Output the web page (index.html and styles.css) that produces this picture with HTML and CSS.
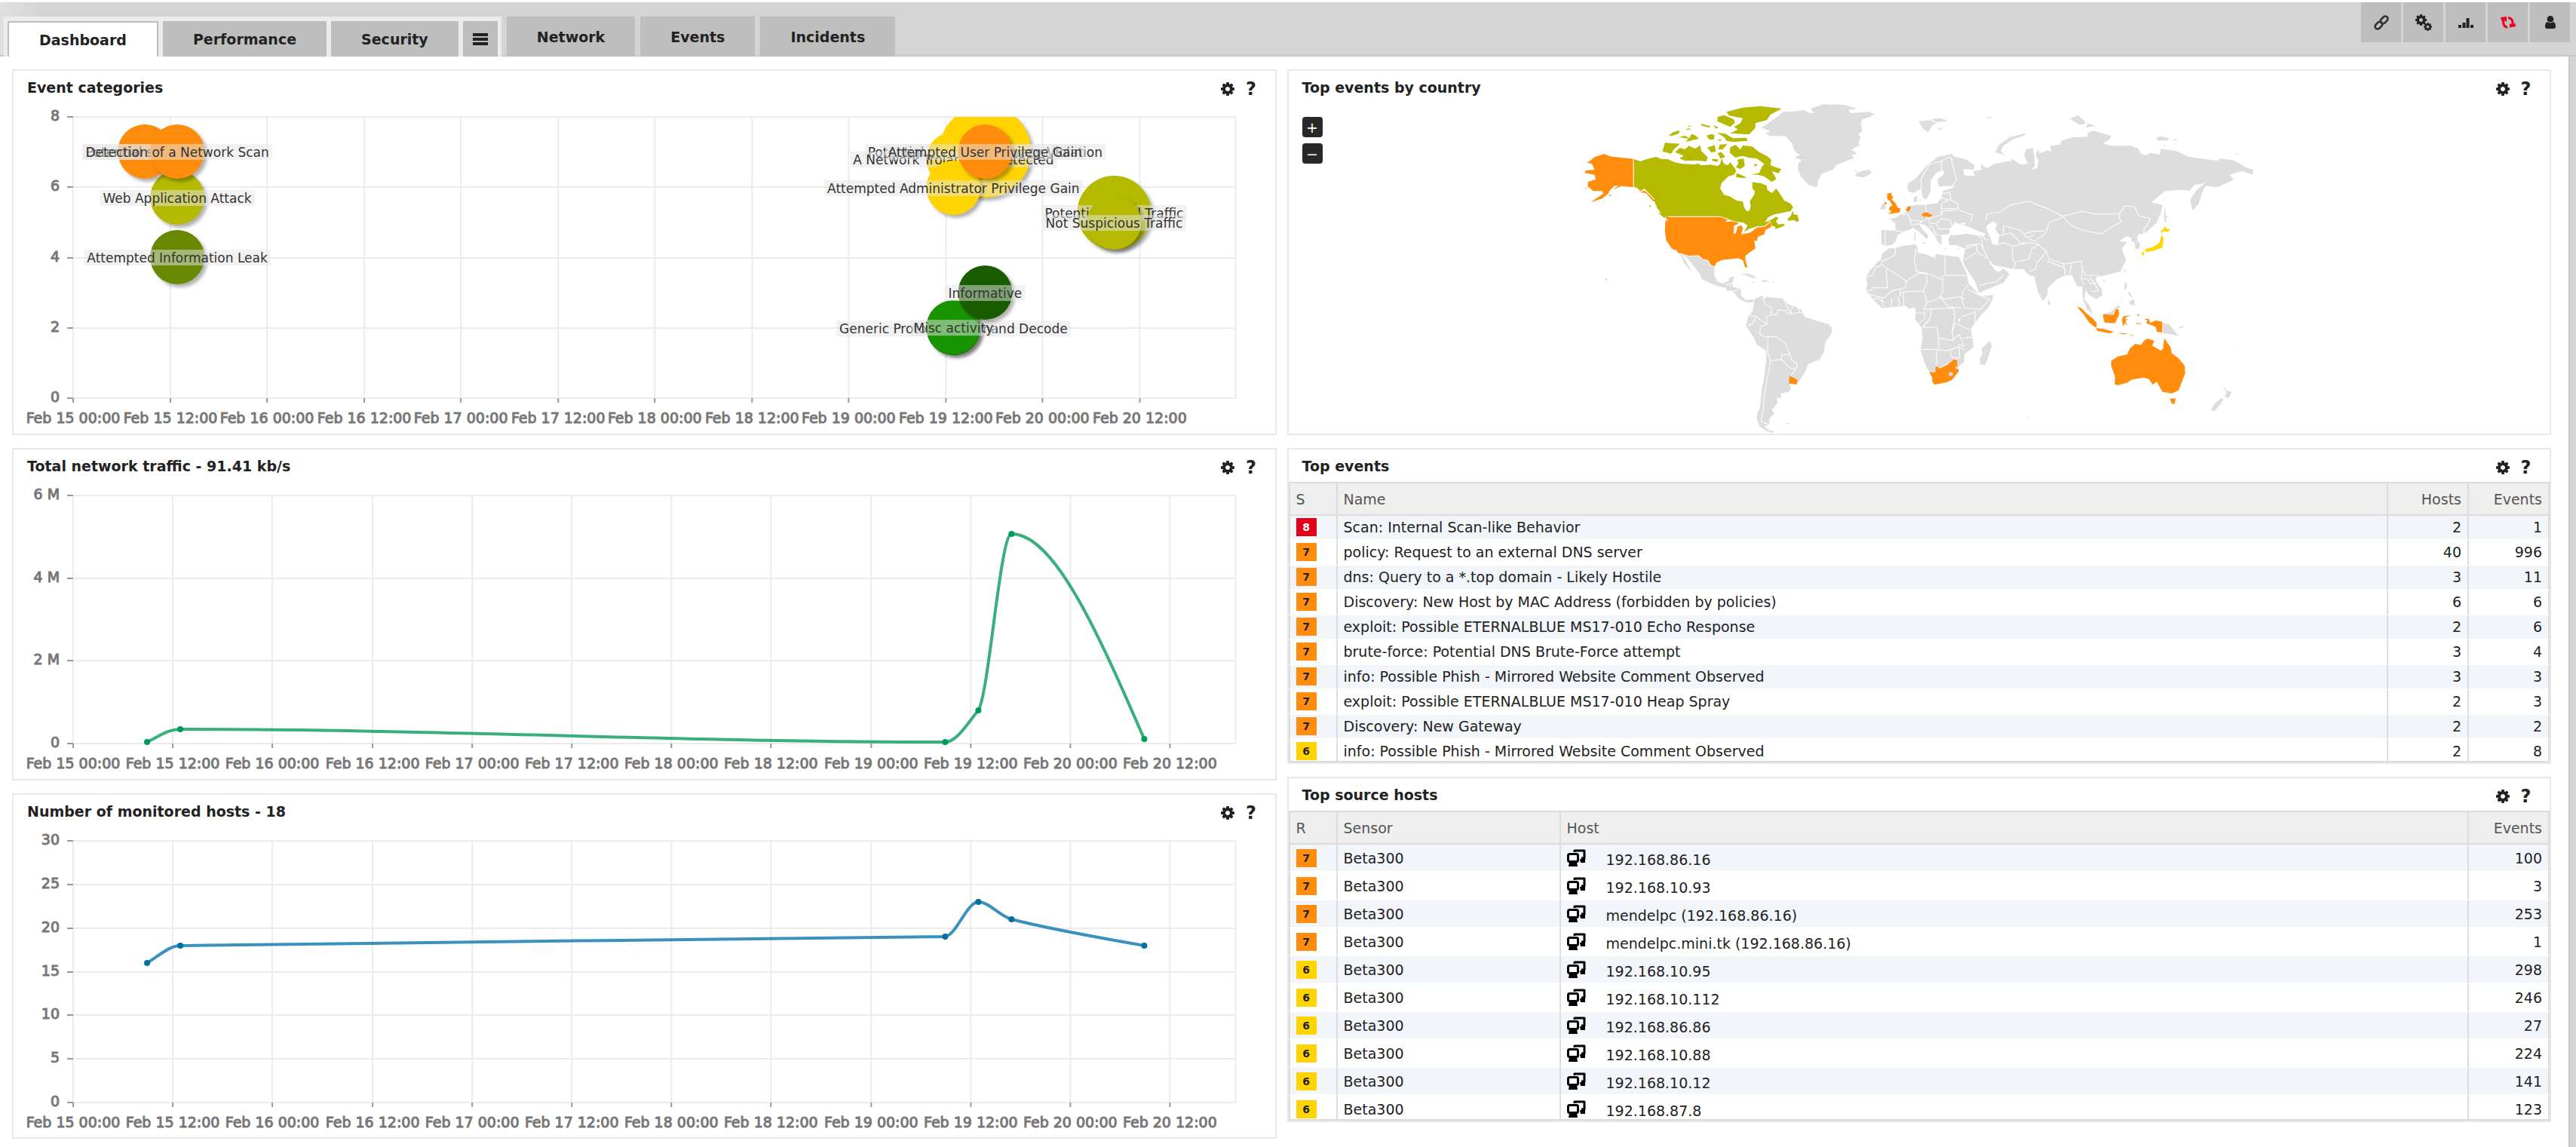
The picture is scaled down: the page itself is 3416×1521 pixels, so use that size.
FILE: index.html
```html
<!DOCTYPE html>
<html lang="en">
<head>
    <meta charset="UTF-8">
    <meta name="viewport" content="width=device-width, initial-scale=1.0">
    <title>Dashboard</title>
    <link rel="stylesheet" href="styles.css">
</head>
<body>

<svg class="sprite" aria-hidden="true">
    <symbol id="i-gear" viewBox="0 -128 1536 1536">
        <path fill-rule="evenodd" d="M1024 640q0 106-75 181t-181 75-181-75-75-181 75-181 181-75 181 75 75 181zm512-109v222q0 12-8 23t-20 13l-185 28q-19 54-39 91 35 50 107 138 10 12 10 25t-9 23q-27 37-99 108t-94 71q-12 0-26-9l-138-108q-44 23-91 38-16 136-29 186-7 28-36 28h-222q-14 0-24.5-8.5t-11.5-21.5l-28-184q-49-16-90-37l-141 107q-10 9-25 9-14 0-25-11-126-114-165-168-7-10-7-23 0-12 8-23 15-21 51-66.5t54-70.5q-27-50-41-99l-183-27q-13-2-21-12.5t-8-23.5v-222q0-12 8-23t19-13l186-28q14-46 39-92-40-57-107-138-10-12-10-24 0-10 9-23 26-36 98.5-107.5t94.5-71.5q13 0 26 10l138 107q44-23 91-38 16-136 29-186 7-28 36-28h222q14 0 24.5 8.5t11.5 21.5l28 184q49 16 90 37l142-107q9-9 24-9 13 0 25 10 129 119 165 170 7 8 7 22 0 12-8 23-15 21-51 66.5t-54 70.5q26 50 41 98l183 28q13 2 21 12.5t8 23.5z"/>
    </symbol>
    <symbol id="i-hosts" viewBox="0 0 26 23">
        <path d="M10 4V2h13v10h-4" fill="none" stroke="#000" stroke-width="3" stroke-linejoin="round"/>
        <path d="M17 13h7v5h-6z"/>
        <rect x="1.5" y="6.5" width="13" height="10" rx="2" fill="#fff" stroke="#000" stroke-width="3"/>
        <path d="M3 17h10l1 6H2z"/>
    </symbol>
</svg>

<header class="topbar">
    <nav class="tabs">
        <div class="tab-group">
            <a class="tab active" href="#dashboard">Dashboard</a>
            <a class="tab" href="#performance">Performance</a>
            <a class="tab" href="#security">Security</a>
            <button class="tab tab-menu" type="button" aria-label="More dashboards">
                <svg width="20" height="16" viewBox="0 0 20 16"><path d="M0 2h20M0 8h20M0 14h20" stroke="#222" stroke-width="4"/></svg>
            </button>
        </div>
        <a class="tab" href="#network">Network</a>
        <a class="tab" href="#events">Events</a>
        <a class="tab" href="#incidents">Incidents</a>
    </nav>
    <div class="tools">
        <button type="button" aria-label="Link">
            <svg width="22" height="22" viewBox="0 0 22 22" fill="none" stroke="#333" stroke-width="2.600">
                <rect x="-5.500" y="-3.400" width="11" height="6.800" rx="3.400" transform="translate(14.600 7.400) rotate(-45)"/>
                <rect x="-5.500" y="-3.400" width="11" height="6.800" rx="3.400" transform="translate(7.400 14.600) rotate(-45)"/>
            </svg>
        </button>
        <button type="button" aria-label="Settings">
            <svg width="22" height="22" viewBox="0 0 22 22" fill="#222"><use href="#i-gear" width="15" height="15"/><use href="#i-gear" x="11" y="11" width="11" height="11"/></svg>
        </button>
        <button type="button" aria-label="Statistics">
            <svg width="20" height="16" viewBox="0 0 20 16" fill="#222"><path d="M0 11h4v4H0zM5.500 8h4v7h-4zM10.500 2h4v13h-4zM16 11h4v4h-4z"/></svg>
        </button>
        <button type="button" aria-label="Refresh">
            <svg width="20" height="18" viewBox="0 0 20 18">
                <path d="M9 15.500C4 14.500 2.500 9 4.500 4M10 2.500C15.500 3 17 8 15.500 13" fill="none" stroke="#f00020" stroke-width="3"/>
                <path d="M0 2l8-1v7L5.500 6 2 8zM19.500 9.500L20 14l-8 1.500V10l3 2z" fill="#f00020"/>
            </svg>
        </button>
        <button type="button" aria-label="User">
            <svg width="14" height="17" viewBox="0 0 14 17" fill="#222"><circle cx="7" cy="4.300" r="4.300"/><path d="M3.300 8a6 6 0 0 0 7.400 0C13 8.500 14 11 14 14q0 3-2.500 3h-9Q0 17 0 14c0-3 1-5.500 3.300-6z"/></svg>
        </button>
    </div>
</header>

<main class="board">
    <div class="column">
        <section class="panel">
            <div class="panel-head">
                <h2>Event categories</h2>
                <button type="button" aria-label="Settings"><svg width="18" height="18"><use href="#i-gear"/></svg></button>
                <button type="button">?</button>
            </div>
            <svg class="chart" id="categories" viewBox="0 0 1672 438"></svg>
        </section>

        <section class="panel">
            <div class="panel-head">
                <h2>Total network traffic - 91.41 kb/s</h2>
                <button type="button" aria-label="Settings"><svg width="18" height="18"><use href="#i-gear"/></svg></button>
                <button type="button">?</button>
            </div>
            <svg class="chart" id="traffic" viewBox="0 0 1672 394"></svg>
        </section>

        <section class="panel">
            <div class="panel-head">
                <h2>Number of monitored hosts - 18</h2>
                <button type="button" aria-label="Settings"><svg width="18" height="18"><use href="#i-gear"/></svg></button>
                <button type="button">?</button>
            </div>
            <svg class="chart" id="hosts" viewBox="0 0 1672 411"></svg>
        </section>
    </div>

    <div class="column">
        <section class="panel map-panel">
            <div class="panel-head">
                <h2>Top events by country</h2>
                <button type="button" aria-label="Settings"><svg width="18" height="18"><use href="#i-gear"/></svg></button>
                <button type="button">?</button>
            </div>
            <div class="map-zoom">
                <button type="button">+</button>
                <button type="button">−</button>
            </div>
            <svg class="chart" viewBox="0 0 1672 438">
                <!-- Americas, Greenland, British Isles -->
                <g transform="translate(372 -7) scale(.33333)">
                    <g class="land">
                        <path d="M763,118L805,90 822,78 850,55 890,53 935,48 948,58 975,60 958,42 1010,25 1090,27 1145,42 1110,48 1118,60 1195,55 1214,65 1195,75 1165,85 1160,105 1165,132 1148,145 1160,155 1150,175 1155,188 1130,200 1116,213 1130,207 1142,222 1120,228 1135,238 1090,255 1060,268 1050,285 1005,300 990,325 985,355 970,352 950,345 920,310 908,280 912,258 925,245 900,240 903,230 918,228 895,210 885,180 860,152 795,150 780,140 800,132Z"/>
                        <path d="M1130,288L1145,290 1150,298 1160,290 1195,285 1202,300 1170,316 1145,312 1135,305 1147,298Z"/>
                        <path d="M435,618L475,628 515,627 530,642 550,645 562,665 578,672 576,705 590,730 610,737 632,728 637,712 657,710 648,735 625,740 620,755 580,745 525,720 520,700 480,650 462,630 450,628 470,660 488,693 455,655 448,635Z"/>
                        <path d="M620,745L648,738 650,752 683,757 683,785 700,803 730,800 732,812 700,812 672,795 650,768 625,765Z"/>
                        <path d="M680,702L705,697 730,705 748,716 725,716 700,703ZM765,724L785,724 795,730 768,732ZM725,732h10v3h-10zM805,732h10v3h-10zM718,680l8,8z"/>
                        <path d="M735,800L768,785 772,800 785,790 800,793 850,797 870,820 905,832 925,845 935,870 975,883 1010,893 1030,900 1045,915 1043,935 1018,970 1013,1010 995,1040 950,1058 940,1085 915,1125 905,1138 875,1135 882,1155 870,1170 840,1175 843,1190 822,1195 830,1210 805,1240 815,1255 795,1275 795,1300 775,1305 790,1318 818,1328 795,1332 755,1305 745,1270 750,1245 757,1240 765,1160 775,1110 783,1040 783,1005 745,980 735,955 715,925 702,905 710,870 728,850 733,825Z"/>
                        <path d="M852,1295l22,-3 -2,5zM1240,428L1250,417 1258,425 1257,440 1237,445Z"/>
                    </g>
                    <path class="border" d="M770,790L778,820 805,835 803,860 785,870 785,900M710,862L745,870 785,900 760,910 757,935 770,948 790,950 820,948 860,975 865,990 877,1020 845,1020 842,1040 800,1045 788,1010 790,950M803,862L825,862 830,842 860,845 865,858 880,858 930,852M850,800L858,812 865,830 880,858M890,830L880,845 885,855M910,832L915,852M877,1020L885,1045 905,1055 905,1070 880,1105M842,1040L880,1075 900,1078M800,1045L790,1100 775,1180 772,1240 762,1285 795,1300M745,870L728,897 710,905M637,740L640,755M650,768L683,757M795,1300V1332"/>
                    <g class="sev5">
                        <path d="M255,242L283,252 305,244 345,234 365,242 390,243 420,256 450,262 500,264 510,260 525,268 560,265 590,270 600,262 605,240 615,262 630,268 640,255 655,275 664,290 655,305 632,312 605,338 600,360 615,385 640,392 665,408 690,412 695,435 705,450 717,448 721,430 718,410 735,385 738,370 728,360 728,335 760,338 785,348 787,365 805,378 823,360 840,385 855,408 880,420 890,435 880,450 840,458 815,463 790,475 778,495 800,486 822,472 832,477 822,490 832,503 850,500 858,505 838,515 818,522 820,512 805,508 800,490 778,510 745,512 715,520 693,535 705,515 708,505 690,495 665,492 630,482 600,472 393,472 380,470 362,455 350,438 338,412 325,392 298,363 282,370 268,356 255,355Z"/>
                        <path d="M868,480L880,470 888,448 892,462 908,466 913,490 900,492 895,485 870,488ZM352,456L372,460 385,477 375,475ZM316,425l6,0 2,12z"/>
                        <path d="M640,195L662,186 680,205 690,188 730,195 755,215 785,230 803,245 800,268 843,283 832,300 805,290 823,322 805,334 775,312 750,305 725,305 755,298 765,275 775,262 745,240 715,238 690,230 660,237 638,218Z"/>
                        <path d="M625,55L690,38 760,32 845,42 800,65 785,88 740,100 740,118 715,145 640,140 670,125 655,115 680,100 690,80 635,70Z"/>
                        <path d="M590,75L615,68 655,85 658,98 640,115 605,100 588,92ZM587,138L620,142 650,160 705,158 708,170 650,175 625,170 615,155ZM705,190l30,5 -22,5z"/>
                        <path d="M420,215L440,198 460,204 475,190 500,202 520,188 526,212 550,235 545,252 500,248 460,250 438,240 455,230ZM380,178L440,182 415,205 405,222 370,212ZM435,155L460,150 478,160 485,143 500,148 515,162 460,175 475,162ZM395,150L410,137 437,128 437,140 410,150Z"/>
                        <path d="M545,150l20,-7 12,5 -2,17 -18,0zM598,185l30,-2 -18,22 -17,0zM590,218l15,-3 15,20 -20,6zM548,197l30,-10 5,25 -18,5zM522,102l38,10 -3,6 -30,-8zM470,110l15,0 -8,5zM463,126l10,-6 12,5zM573,108l20,8 -10,6zM567,242l25,2 -3,10 -22,-5zM588,165l18,0 -5,7zM668,245l25,-5 5,30 -18,13 -18,-8 10,-15zM665,298l38,17 -5,4 -35,-4zM733,265l13,-3 -3,12z"/>
                    </g>
                    <g class="sev7">
                        <path d="M382,472H600L632,482 620,492 650,490 675,497 655,508 652,538 662,540 668,512 685,506 690,520 683,542 720,535 745,515 775,512 800,490 803,512 780,525 775,542 750,552 745,570 735,565 740,598 715,615 700,628 700,645 708,672 700,675 690,645 672,637 640,640 605,645 583,655 578,672 562,665 550,645 530,642 515,627 475,628 450,620 435,618 425,605 408,600 385,565 380,530 382,485 393,490Z"/>
                        <path d="M255,242V355L205,350 175,365 195,347 178,350 160,368 155,380 130,400 85,415 135,380 130,370 95,370 72,350 75,333 105,323 100,305 60,298 65,288 100,285 90,262 68,256 80,252 100,235 140,222 150,228 170,233ZM155,388l15,-4 -8,7zM62,357l8,0 -3,4z"/>
                        <path d="M255,355L285,372 300,368 338,404 334,412 305,378 285,376ZM144,718l6,3 -4,5z"/>
                        <path d="M875,1104L908,1122 903,1140 873,1135Z"/>
                        <path d="M1265,380L1282,376 1280,388 1288,391 1283,405 1297,418 1305,435 1317,440 1313,455 1268,461 1282,450 1270,445 1275,432 1285,428 1275,410 1263,400ZM1252,414l8,0 2,8 -6,2z"/>
                    </g>
                    <path class="border" d="M255,242V355L285,372 298,362 338,404M393,472H600L632,482M693,535L720,522 745,512 778,510 800,490M435,618L475,628 515,627 530,642 550,645 562,665 578,672"/>
                </g>
                <!-- Eurasia, Africa, Oceania -->
                <g transform="translate(742 -7) scale(.35714 .33333)">
                    <g class="land">
                        <path d="M148,598L175,597 200,588 250,582 258,600 255,615 290,622 320,636 325,620 358,626 410,632 420,655 440,700 445,735 470,765 488,788 538,783 535,800 520,832 490,865 470,895 455,915 458,945 465,990 430,1020 430,1050 405,1070 410,1085 385,1120 365,1130 320,1140 310,1110 285,1060 267,1000 275,960 272,915 248,880 250,850 245,832 225,838 210,825 180,830 125,835 95,805 75,780 65,765 70,740 66,710 80,685 110,650 120,645 125,618Z"/>
                        <path d="M525,965L532,985 522,1020 508,1062 490,1060 487,1035 497,1020 495,995Z"/>
                        <path d="M220,340L250,320 285,275 330,235 380,222 398,235 440,245 468,268 465,285 425,282 430,305 440,310 470,310 462,292 495,285 490,262 515,280 540,262 605,250 605,240 640,265 665,262 652,225 660,205 685,198 690,235 692,270 680,285 700,280 705,250 695,225 705,202 710,220 740,208 752,215 750,190 785,185 790,170 835,155 885,155 890,138 910,130 975,150 970,165 945,180 975,190 1045,190 1075,200 1085,222 1105,228 1120,218 1155,225 1160,202 1215,210 1265,235 1305,240 1370,250 1380,240 1430,248 1475,275 1503,285 1500,305 1460,290 1415,305 1430,325 1370,355 1325,350 1310,385 1300,420 1278,448 1268,405 1290,370 1328,332 1310,342 1285,345 1265,370 1240,365 1175,370 1125,415 1165,425 1160,455 1145,495 1110,530 1095,540 1080,540 1070,555 1083,580 1078,600 1065,600 1062,575 1050,570 1050,555 1030,550 1005,570 1035,572 1015,600 1030,645 1010,690 955,705 920,712 918,725 940,760 942,785 920,800 895,785 880,765 875,800 895,825 907,860 885,840 870,800 868,750 850,750 830,705 805,705 775,720 740,755 738,785 722,808 705,775 690,710 670,705 650,680 610,680 575,672 540,665 520,640 525,655 545,685 560,692 575,678 598,700 575,735 550,745 485,775 470,730 430,665 425,645 433,600 400,585 375,585 370,560 380,545 440,540 470,545 500,548 510,540 485,530 430,505 395,500 375,520 378,540 345,545 345,585 330,570 320,545 300,520 285,505 262,500 275,525 297,545 290,560 265,535 240,515 225,525 205,530 183,545 175,570 160,585 140,588 122,580 122,525 175,527 175,500 153,480 172,478 195,462 225,450 230,430 250,425 285,425 330,418 345,395 350,370 385,358 395,350 335,352 330,325 357,300 350,288 325,298 305,330 305,370 290,405 275,395 270,360 240,378 220,370Z"/>
                        <path d="M243,395L258,388 252,415 243,415ZM262,402l8,3 -5,8zM260,93L300,88 327,100 310,110 295,137 275,120ZM308,85L340,80 371,90 330,97ZM332,118l18,3 -12,7zM545,215L560,185 600,155 657,140 655,148 610,165 575,190 565,210 580,227ZM510,78l28,-4 -20,8zM822,82L852,68 880,95 875,105 855,105ZM880,118l10,-18 25,12zM1140,158L1160,152 1190,160 1185,168 1150,170ZM1203,163l25,4 -20,2zM1165,188l15,0 -5,3zM1430,222l18,-3 0,5z"/>
                        <path d="M1172,430L1180,470 1188,470 1178,478 1180,495 1173,492ZM742,800L750,815 748,825 740,822ZM1025,682l5,0 -5,20zM1025,733l8,5 0,20 -8,5zM1040,810l20,-10 3,25 -15,-3zM1035,770l10,5 10,20 -12,-10zM1010,805l12,-20 -10,22zM943,725l10,-3 -5,10zM245,532l4,0 0,33 -5,0zM272,573l18,2 -5,5zM345,597l20,2 -5,3zM400,600l15,-3 -8,6z"/>
                        <path d="M944,858L975,850 1000,823 1010,832 990,842 983,862ZM1168,893L1190,900 1205,920 1227,947 1200,940 1168,935ZM1220,913l28,-8 -10,10zM1388,1142L1408,1165 1423,1168 1410,1195 1397,1188 1403,1170ZM1385,1193L1392,1200 1360,1245 1345,1240 1360,1215ZM1330,1025l13,13zM1422,1003l12,-8 -10,10zM663,1270l10,2 -8,2z"/>
                    </g>
                    <path class="sea" d="M385,515L395,493 430,510 465,528 480,545 440,538 400,545 372,540ZM410,498L435,495 430,505ZM512,510L535,490 553,500 545,520 560,545 555,580 535,582 525,550 515,530ZM405,880l12,-5 -5,18z"/>
                    <path class="border" d="M175,597L172,625 125,650 120,668 100,672 92,705 68,710M120,660L215,727 265,695 290,700M252,600L245,640 252,690 290,697 350,722M358,628V705H440M350,705V722L350,770 340,790 355,800 410,790 435,800M140,680L145,755 90,755 85,765 65,765M215,727L210,755 165,765 130,795 90,785 75,780M290,700L292,730 278,768 205,770 190,785M280,768L292,812 330,800 340,790 355,810 370,830 420,835M445,740L425,770 420,795 430,835 490,840 525,800 490,785 440,760M125,795L130,830M160,795V830M185,790L190,825M205,770V825M292,812L280,840 310,838M310,838L300,880 275,912H300M310,838L390,835 395,870 390,900 385,930M300,912H328L335,955 390,965 385,930 395,900M250,855H283V880L262,895M270,1000H335V955M335,1002L365,1005 410,990M328,1005L325,1090M325,1065L340,1075 370,1055 413,1030 410,990 428,1000M375,1005L385,1030 410,1035M395,895L450,922M390,960L412,940 428,985 405,980M425,955L465,950M470,845V895M420,870L470,850M190,755L195,790M95,800L110,795 125,810"/>
                    <path class="border" d="M380,235L390,280 402,325 380,358M375,370L380,405 405,420 410,445 460,465 455,490M510,485L515,460 560,455 600,425 670,410 700,425 740,440 795,470 870,450 920,462 1005,460 1025,430 1060,432 1080,470 1120,480 1110,505 1098,520 1095,540M795,470L830,510 885,530 940,540 970,518 1015,490 1005,480 1005,462M575,545V508L635,525 650,540 690,530 735,528 745,495 795,475M555,545L575,545 600,535 640,575 655,585M650,545L690,570 735,535M665,553L690,545M495,560L500,600 520,640M545,585L575,575 610,590 608,640 620,655 612,680M610,590L655,575 705,580 680,600 670,640 625,650M705,583L735,610 700,655 695,680 675,690M735,610L745,640 800,660 830,655 865,648 868,680 880,705M745,645L740,650 795,672 800,660M800,670L805,700M830,660L820,700M868,680L865,720 875,745M865,720L885,720 900,740 920,735M880,705L925,705 930,712M895,712L930,765 900,770M430,600L475,585 480,615 520,640M430,645L475,615M485,745L550,730 575,705M495,555L480,545M270,375V320L300,265 345,250V290M345,250L375,235 388,245"/>
                    <path class="border" d="M285,425L290,455M195,462L220,462 230,485 270,490 300,478 345,465V420M300,478L300,498 325,500 345,480 378,485 385,510M230,485L232,505 260,500 275,490M345,440L410,440M345,465L350,450 400,445M325,500L335,520 380,520M300,505L315,520 325,545 345,545M335,400L350,398 375,405M350,418L375,402M135,530L137,585M175,527L210,535M340,378H378M1065,570L1080,570M435,590L445,585 490,580 500,600M500,545L505,560 520,565"/>
                    <g class="sev7">
                        <path d="M212,446L220,432 232,430 228,446 222,452ZM271,462L288,454 312,466 300,474 290,470 280,473Z"/>
                        <path d="M300,1090L322,1092 325,1065 340,1075 368,1060 390,1040 403,1042 405,1070 410,1085 385,1120 365,1130 320,1140 312,1130 310,1110Z"/>
                        <path d="M848,830L865,836 885,858 908,878 922,895 920,914 908,906 893,892 870,856ZM918,915L945,918 985,930 970,936 925,927ZM944,860L985,862 992,840 1002,840 1005,860 990,895 950,893ZM1015,880L1020,868 1047,864 1030,872 1025,880 1036,878 1028,890 1038,905 1025,895 1020,910ZM1072,858l8,5 -5,6zM1097,878L1115,878 1120,895 1140,885 1165,890 1165,933 1145,930 1140,910 1105,895 1110,885ZM1065,895l22,0 0,3 -20,0zM1000,934l20,2 20,0 -20,4zM1045,945l15,-7 -12,9zM1495,319l15,3z"/>
                        <path d="M975,1045L1000,1028 1035,1020 1045,995 1065,978 1085,982 1100,962 1110,957 1135,965 1128,985 1160,1005 1168,995 1172,955 1185,975 1195,990 1200,1015 1225,1035 1248,1065 1250,1095 1225,1163 1200,1175 1165,1168 1145,1128 1130,1140 1115,1118 1095,1112 1050,1120 1035,1132 1000,1142 988,1138 990,1110 975,1065ZM1193,1195L1215,1195 1210,1217 1200,1215Z"/>
                    </g>
                    <g class="sev6">
                        <path d="M1172,510L1183,520 1195,522 1185,532 1170,530 1160,540 1162,525 1170,522ZM1162,545L1170,560 1165,595 1130,608 1098,608 1105,600 1130,593 1155,575ZM1087,615L1100,612 1093,630ZM1107,608l14,0 -12,7z"/>
                    </g>
                    <g class="land"><ellipse cx="380" cy="1098" rx="8" ry="8"/><circle cx="403" cy="1073" r="6"/></g>
                </g>
            </svg>
        </section>

        <section class="panel">
            <div class="panel-head">
                <h2>Top events</h2>
                <button type="button" aria-label="Settings"><svg width="18" height="18"><use href="#i-gear"/></svg></button>
                <button type="button">?</button>
            </div>
            <table>
                <thead>
                    <tr><th class="col-sev">S</th><th>Name</th><th class="col-num">Hosts</th><th class="col-num">Events</th></tr>
                </thead>
                <tbody>
                    <tr><td><span class="sev s8">8</span></td><td>Scan: Internal Scan-like Behavior</td><td class="num">2</td><td class="num">1</td></tr>
                    <tr><td><span class="sev s7">7</span></td><td>policy: Request to an external DNS server</td><td class="num">40</td><td class="num">996</td></tr>
                    <tr><td><span class="sev s7">7</span></td><td>dns: Query to a *.top domain - Likely Hostile</td><td class="num">3</td><td class="num">11</td></tr>
                    <tr><td><span class="sev s7">7</span></td><td>Discovery: New Host by MAC Address (forbidden by policies)</td><td class="num">6</td><td class="num">6</td></tr>
                    <tr><td><span class="sev s7">7</span></td><td>exploit: Possible ETERNALBLUE MS17-010 Echo Response</td><td class="num">2</td><td class="num">6</td></tr>
                    <tr><td><span class="sev s7">7</span></td><td>brute-force: Potential DNS Brute-Force attempt</td><td class="num">3</td><td class="num">4</td></tr>
                    <tr><td><span class="sev s7">7</span></td><td>info: Possible Phish - Mirrored Website Comment Observed</td><td class="num">3</td><td class="num">3</td></tr>
                    <tr><td><span class="sev s7">7</span></td><td>exploit: Possible ETERNALBLUE MS17-010 Heap Spray</td><td class="num">2</td><td class="num">3</td></tr>
                    <tr><td><span class="sev s7">7</span></td><td>Discovery: New Gateway</td><td class="num">2</td><td class="num">2</td></tr>
                    <tr><td><span class="sev s6">6</span></td><td>info: Possible Phish - Mirrored Website Comment Observed</td><td class="num">2</td><td class="num">8</td></tr>
                </tbody>
            </table>
        </section>

        <section class="panel">
            <div class="panel-head">
                <h2>Top source hosts</h2>
                <button type="button" aria-label="Settings"><svg width="18" height="18"><use href="#i-gear"/></svg></button>
                <button type="button">?</button>
            </div>
            <table class="roomy">
                <thead>
                    <tr><th class="col-sev">R</th><th class="col-sensor">Sensor</th><th>Host</th><th class="col-num">Events</th></tr>
                </thead>
                <tbody>
                    <tr><td><span class="sev s7">7</span></td><td>Beta300</td><td><span class="host"><svg width="26" height="23"><use href="#i-hosts"/></svg><span>192.168.86.16</span></span></td><td class="num">100</td></tr>
                    <tr><td><span class="sev s7">7</span></td><td>Beta300</td><td><span class="host"><svg width="26" height="23"><use href="#i-hosts"/></svg><span>192.168.10.93</span></span></td><td class="num">3</td></tr>
                    <tr><td><span class="sev s7">7</span></td><td>Beta300</td><td><span class="host"><svg width="26" height="23"><use href="#i-hosts"/></svg><span>mendelpc (192.168.86.16)</span></span></td><td class="num">253</td></tr>
                    <tr><td><span class="sev s7">7</span></td><td>Beta300</td><td><span class="host"><svg width="26" height="23"><use href="#i-hosts"/></svg><span>mendelpc.mini.tk (192.168.86.16)</span></span></td><td class="num">1</td></tr>
                    <tr><td><span class="sev s6">6</span></td><td>Beta300</td><td><span class="host"><svg width="26" height="23"><use href="#i-hosts"/></svg><span>192.168.10.95</span></span></td><td class="num">298</td></tr>
                    <tr><td><span class="sev s6">6</span></td><td>Beta300</td><td><span class="host"><svg width="26" height="23"><use href="#i-hosts"/></svg><span>192.168.10.112</span></span></td><td class="num">246</td></tr>
                    <tr><td><span class="sev s6">6</span></td><td>Beta300</td><td><span class="host"><svg width="26" height="23"><use href="#i-hosts"/></svg><span>192.168.86.86</span></span></td><td class="num">27</td></tr>
                    <tr><td><span class="sev s6">6</span></td><td>Beta300</td><td><span class="host"><svg width="26" height="23"><use href="#i-hosts"/></svg><span>192.168.10.88</span></span></td><td class="num">224</td></tr>
                    <tr><td><span class="sev s6">6</span></td><td>Beta300</td><td><span class="host"><svg width="26" height="23"><use href="#i-hosts"/></svg><span>192.168.10.12</span></span></td><td class="num">141</td></tr>
                    <tr><td><span class="sev s6">6</span></td><td>Beta300</td><td><span class="host"><svg width="26" height="23"><use href="#i-hosts"/></svg><span>192.168.87.8</span></span></td><td class="num">123</td></tr>
                </tbody>
            </table>
        </section>
    </div>
</main>

<script src="charts.js"></script>
</body>
</html>
```
FILE: styles.css
```css
* {
    box-sizing: border-box;
}
body {
    margin: 0;
    min-height: 100vh;
    display: flex;
    flex-direction: column;
    background: #d4d4d4;
    color: #222;
    font-family: Verdana, "DejaVu Sans", sans-serif;
    font-size: 19px;
    line-height: 24px;
}
button {
    border: none;
    padding: 0;
    background: none;
    color: inherit;
    font: inherit;
    cursor: pointer;
}
.sprite {
    display: none;
}

/* Top bar */
.topbar {
    display: flex;
    justify-content: space-between;
    align-items: flex-start;
    height: 75px;
    padding: 0 8px 0 5px;
    border-top: 3px solid #707070;
    border-image: linear-gradient(#fff 67%, #707070 67%) 3;
    background: linear-gradient(#c8c8c8, #c8c8c8) bottom / 100% 2px no-repeat, linear-gradient(90deg, #e0e0e0, #d4d4d4 60px);
}
.tabs {
    display: flex;
    gap: 7px;
    padding-top: 19px;
}
.tab-group {
    display: flex;
    gap: 6px;
    padding: 6px 5px 0;
    background: #ececec;
}
.tab {
    display: flex;
    align-items: center;
    height: 53px;
    padding: 0 40px;
    background: #bebebe;
    color: #222;
    font-weight: bold;
    text-decoration: none;
}
.tab-group .tab {
    height: 47px;
}
.tab.active {
    background: #fff;
    border: 2px solid #bebebe;
    border-bottom: none;
}
.tab-menu {
    padding: 0 13px;
}
.tools {
    display: flex;
    gap: 3px;
}
.tools button {
    display: flex;
    align-items: center;
    justify-content: center;
    width: 53px;
    height: 53px;
    background: #bebebe;
}

/* Dashboard */
.board {
    flex: 1;
    display: flex;
    align-items: flex-start;
    gap: 14px;
    margin-right: 8px;
    padding: 17px 23px 8px 16px;
    border-right: 2px solid #c8c8c8;
    background: #fff;
}
.column {
    flex: 1;
    min-width: 0;
    display: flex;
    flex-direction: column;
    gap: 17px;
}
.panel {
    border: 2px solid #e8e8e8;
}
.panel-head {
    display: flex;
    align-items: center;
    height: 43px;
    padding: 0 16px 0 18px;
}
.panel-head h2 {
    flex: 1;
    margin: 0;
    font-size: 19px;
}
.panel-head button {
    display: flex;
    align-items: center;
    justify-content: center;
    width: 31px;
    height: 24px;
    margin-top: 4px;
    fill: #222;
    font-size: 24px;
    font-weight: bold;
}

/* Charts */
.chart {
    display: block;
    width: 100%;
}
.chart text {
    fill: #333;
    font-size: 17px;
    text-anchor: middle;
}
.chart .axis {
    fill: #777;
    stroke: #777;
    stroke-width: 1px;
    font-size: 19px;
}
.chart .axis-y {
    text-anchor: end;
}
.grid {
    fill: none;
    stroke: #ececec;
    stroke-width: 2px;
}
.tick {
    stroke: #999;
    stroke-width: 2px;
}
.bubble {
    filter: drop-shadow(4px 4px 2px rgba(0, 0, 0, .3));
}
.bubble-label {
    fill: rgba(230, 230, 230, .5);
}
.line {
    fill: none;
    stroke-width: 4px;
    opacity: .8;
}

/* Map */
.map-panel {
    position: relative;
}
.map-zoom {
    position: absolute;
    top: 61px;
    left: 18px;
    display: grid;
    gap: 8px;
}
.map-zoom button {
    width: 27px;
    height: 27px;
    border-radius: 4px;
    background: #292929;
    color: #fff;
}
.land {
    fill: #ddd;
}
.sea {
    fill: #fff;
}
.border {
    fill: none;
    stroke: #fff;
    stroke-width: 3px;
    stroke-linejoin: round;
}
.sev5 {
    fill: #b5ba00;
}
.sev6 {
    fill: #ffd400;
}
.sev7 {
    fill: #ff8c0c;
}

/* Tables */
table {
    width: 100%;
    table-layout: fixed;
    border-collapse: separate;
    border-spacing: 0;
    border-bottom: 2px solid #dcdcdc;
}
th {
    height: 45px;
    padding: 0 8px;
    border: 2px solid #dcdcdc;
    border-left: none;
    background: #efefef;
    color: #555;
    font-weight: normal;
    text-align: left;
}
td {
    padding: 3px 8px 4px;
    border-right: 2px solid #dcdcdc;
    border-bottom: 2px solid #fff;
}
.roomy td {
    padding: 6px 8px 5px;
}
th:first-child,
td:first-child {
    border-left: 2px solid #dcdcdc;
}
tbody tr:nth-child(odd) {
    background: #f2f5fa;
}
tbody tr:last-child td {
    padding-bottom: 1px;
    border-bottom: none;
}
.col-sev {
    width: 65px;
}
.col-sensor {
    width: 296px;
}
.col-num {
    width: 107px;
    text-align: right;
}
.num {
    text-align: right;
}
.sev {
    display: block;
    width: 27px;
    height: 24px;
    font-size: 14px;
    font-weight: bold;
    text-align: center;
}
.s8 {
    background: #e2001a;
    color: #fff;
}
.s7 {
    background: #ff8c0c;
}
.s6 {
    background: #ffd400;
}
.host {
    display: flex;
    gap: 26px;
    height: 24px;
}
.host span {
    padding-top: 2px;
}
```
FILE: charts.js
```js
const NS = 'http://www.w3.org/2000/svg';
const LEFT = 79;
const RIGHT = 1620;

function add(parent, tag, attrs, text) {
    const el = document.createElementNS(NS, tag);
    for (const key in attrs) el.setAttribute(key, attrs[key]);
    if (text !== undefined) el.textContent = text;
    parent.appendChild(el);
    return el;
}

// Grid, ticks and labels; yLabels run from the top line to the bottom one
function drawAxes(svg, top, bottom, step, yLabels) {
    let grid = '';
    let ticks = '';
    yLabels.forEach((label, i) => {
        const y = Math.round(top + (bottom - top) * i / (yLabels.length - 1));
        grid += `M${LEFT} ${y}H${RIGHT}`;
        ticks += `M${LEFT - 8} ${y}h8`;
        add(svg, 'text', { class: 'axis axis-y', x: 61, y: y + 5 }, label);
    });
    for (let i = 0; i < 12; i++) {
        const x = Math.round(LEFT + step * i);
        grid += `M${x} ${top}V${bottom}`;
        ticks += `M${x} ${bottom}v6`;
        const label = `Feb ${15 + Math.floor(i / 2)} ${i % 2 ? '12' : '00'}:00`;
        add(svg, 'text', { class: 'axis', x: x, y: bottom + 33 }, label);
    }
    add(svg, 'path', { class: 'grid', d: grid + `M${RIGHT} ${top}V${bottom}` });
    add(svg, 'path', { class: 'tick', d: ticks });
}

function drawLine(svg, color, dotColor, d, points) {
    add(svg, 'path', { class: 'line', stroke: color, d: d });
    points.forEach(p => add(svg, 'circle', { cx: p[0], cy: p[1], r: 4, fill: dotColor }));
}

const categories = document.getElementById('categories');
drawAxes(categories, 18, 391, 128.5, ['8', '6', '4', '2', '0']);

const clip = add(categories, 'clipPath', { id: 'plot' });
add(clip, 'rect', { x: LEFT, y: 18, width: RIGHT - LEFT, height: 373 });

// x, y, radius, color, label
[
    [217, 204, 36, '#678800', 'Attempted Information Leak'],
    [217, 125, 36, '#b5ba00', 'Web Application Attack'],
    [174, 64, 36, '#ff8c0c', 'Potential scanning'],
    [217, 64, 36, '#ff8c0c', 'Detection of a Network Scan'],
    [1246, 298, 36, '#179400', 'Generic Protocol Command Decode'],
    [1246, 297, 36, '#179400', 'Misc activity'],
    [1288, 251, 36, '#1a5c00', 'Informative'],
    [1288, 64, 61, '#ffd400', 'Potential Corporate Privacy Violation'],
    [1246, 74, 36, '#ffd400', 'A Network Trojan was Detected'],
    [1246, 112, 36, '#ffd400', 'Attempted Administrator Privilege Gain'],
    [1288, 64, 36, '#ff8c0c', 'Attempted User Privilege Gain'],
    [1459, 145, 49, '#b5ba00', 'Potentially Bad Traffic'],
    [1459, 158, 36, '#b5ba00', 'Not Suspicious Traffic']
].forEach(([x, y, r, color, label]) => {
    const layer = add(categories, 'g', { 'clip-path': 'url(#plot)' });
    add(layer, 'circle', { class: 'bubble', cx: x, cy: y, r: r, fill: color });
    const box = add(categories, 'rect', { class: 'bubble-label', y: y - 10, height: 21 });
    const text = add(categories, 'text', { x: x, y: y + 7 }, label);
    const width = text.getComputedTextLength() + 8;
    box.setAttribute('x', x - width / 2);
    box.setAttribute('width', width);
});

const traffic = document.getElementById('traffic');
drawAxes(traffic, 18, 347, 132.2, ['6 M', '4 M', '2 M', '0']);
drawLine(traffic, '#0a9a5c', '#009a5a',
    'M177 345C192 338 204 328 221 328C559 328 897 345 1235 345C1250 345 1264 321 1279 303C1293 281 1308 69 1323 69C1381 69 1440 206 1499 341',
    [[177, 345], [221, 328], [1235, 345], [1279, 303], [1323, 69], [1499, 341]]);

const hosts = document.getElementById('hosts');
drawAxes(hosts, 18, 365, 132.2, ['30', '25', '20', '15', '10', '5', '0']);
drawLine(hosts, '#0a76ac', '#00709f',
    'M177 180C192 171 206 157 221 157C559 151 897 150 1235 145C1250 143 1264 99 1279 99C1293 99 1308 118 1323 122C1381 137 1440 146 1499 157',
    [[177, 180], [221, 157], [1235, 145], [1279, 99], [1323, 122], [1499, 157]]);
```
